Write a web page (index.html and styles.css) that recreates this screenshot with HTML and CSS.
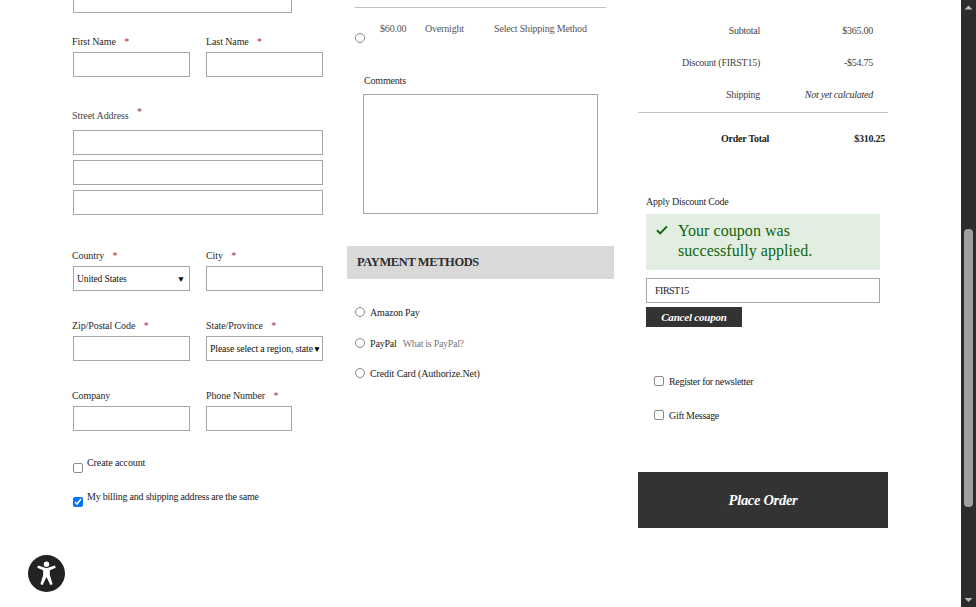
FILE: index.html
```html
<!DOCTYPE html>
<html lang="en">
<head>
<meta charset="utf-8">
<title>Checkout</title>
<link rel="stylesheet" href="styles.css">
</head>
<body>
<main class="page">
  <section class="col-address">
    <input class="field field-cut" type="text" aria-label="Email">
    <div class="row row-name">
      <div class="cell"><label class="lbl">First Name <i class="req">*</i></label><input class="field" type="text"></div>
      <div class="cell"><label class="lbl">Last Name <i class="req">*</i></label><input class="field" type="text"></div>
    </div>
    <div class="street">
      <label class="lbl lbl-street">Street Address <i class="req req-up">*</i></label>
      <input class="field full" type="text">
      <input class="field full" type="text">
      <input class="field full" type="text">
    </div>
    <div class="row row-country">
      <div class="cell"><label class="lbl">Country <i class="req">*</i></label><div class="field sel">United States<span class="caret">▼</span></div></div>
      <div class="cell"><label class="lbl">City <i class="req">*</i></label><input class="field" type="text"></div>
    </div>
    <div class="row row-next">
      <div class="cell"><label class="lbl">Zip/Postal Code <i class="req">*</i></label><input class="field" type="text"></div>
      <div class="cell"><label class="lbl">State/Province <i class="req">*</i></label><div class="field sel sel-tight">Please select a region, state<span class="caret">▼</span></div></div>
    </div>
    <div class="row row-next">
      <div class="cell"><label class="lbl">Company</label><input class="field" type="text"></div>
      <div class="cell"><label class="lbl">Phone Number <i class="req">*</i></label><input class="field short" type="text"></div>
    </div>
    <div class="check check-first"><input class="box" type="checkbox"><span>Create account</span></div>
    <div class="check check-second"><input type="checkbox" checked><span>My billing and shipping address are the same</span></div>
  </section>

  <section class="col-methods">
    <hr class="rule rule-ship">
    <div class="ship">
      <input class="dot" type="radio" name="ship">
      <span class="ship-price">$60.00</span>
      <span class="ship-name">Overnight</span>
      <span class="ship-method">Select Shipping Method</span>
    </div>
    <label class="lbl lbl-comments">Comments</label>
    <textarea class="comments"></textarea>
    <h2 class="pay-title">PAYMENT METHODS</h2>
    <div class="pay pay-a"><input class="dot" type="radio" name="pay"><span>Amazon Pay</span></div>
    <div class="pay pay-b"><input class="dot" type="radio" name="pay"><span>PayPal</span><a class="pay-link">What is PayPal?</a></div>
    <div class="pay pay-c"><input class="dot" type="radio" name="pay"><span>Credit Card (Authorize.Net)</span></div>
  </section>

  <section class="col-summary">
    <div class="sum"><span class="sum-k">Subtotal</span><span class="sum-v">$365.00</span></div>
    <div class="sum"><span class="sum-k">Discount (FIRST15)</span><span class="sum-v">-$54.75</span></div>
    <div class="sum"><span class="sum-k">Shipping</span><span class="sum-v sum-i">Not yet calculated</span></div>
    <hr class="rule rule-sum">
    <div class="sum-total"><span class="tot-k">Order Total</span><span class="tot-v">$310.25</span></div>
    <div class="discount">
      <label class="lbl lbl-discount">Apply Discount Code</label>
      <div class="notice">
        <svg class="tick" width="12" height="10" viewBox="0 0 12 10"><path d="M1 5.2 4.2 8.4 11 1.4" fill="none" stroke="#0e660e" stroke-width="2"/></svg>
        <p>Your coupon was successfully applied.</p>
      </div>
      <input class="field coupon" type="text" value="FIRST15">
      <button class="cancel" type="button">Cancel coupon</button>
    </div>
    <div class="check-r check-news"><input class="box" type="checkbox"><span>Register for newsletter</span></div>
    <div class="check-r check-gift"><input class="box" type="checkbox"><span>Gift Message</span></div>
    <button class="place" type="button">Place Order</button>
  </section>
</main>

<div class="scrollbar" aria-hidden="true">
  <svg class="arrow" width="15" height="14" viewBox="0 0 15 14"><path d="M3.5 9.5 7.5 5.5 11.5 9.5Z" fill="#bdbdbd"/></svg>
  <div class="track"><div class="thumb"></div></div>
  <svg class="arrow" width="15" height="14" viewBox="0 0 15 14"><path d="M3.5 5 7.5 9 11.5 5Z" fill="#bdbdbd"/></svg>
</div>

<button class="a11y" type="button" aria-label="Accessibility">
  <svg width="37" height="37" viewBox="0 0 38 38">
    <circle cx="19" cy="19" r="19" fill="#222"/>
    <circle cx="19" cy="9.4" r="2.8" fill="#fff"/>
    <path d="M10.4 10.9 19 13.6 27.6 10.9 28.5 13.2 22.5 15.6 22.4 20.5 25.3 30 22.9 30.9 19.3 23 18.7 23 15.1 30.9 12.7 30 15.6 20.5 15.5 15.6 9.5 13.2Z" fill="#fff"/>
  </svg>
</button>
</body>
</html>
```

FILE: styles.css
```css
* { box-sizing: border-box; }
html, body { margin: 0; height: 607px; overflow: hidden; background: #fff; }
body {
  display: flex;
  font-family: "Liberation Serif", "Times New Roman", serif;
  font-size: 10px;
  color: #222;
  letter-spacing: -0.1px;
}
.page {
  flex: 1;
  display: flex;
  align-items: flex-start;
  height: 607px;
  overflow: hidden;
}
.col-address { width: 323px; padding-left: 72px; flex: none; }
.col-methods { width: 267px; margin-left: 24px; flex: none; letter-spacing: -0.18px; }
.col-summary { width: 250px; margin-left: 24px; flex: none; letter-spacing: -0.25px; }

.lbl { display: block; height: 10px; line-height: 10px; font-size: 10px; white-space: nowrap; color: #2a2a2a; }
.req { color: #b0233f; font-style: normal; margin-left: 6px; }
.field {
  display: block;
  height: 25px;
  width: 117px;
  margin: 0 0 0 1px;
  padding: 0 4px;
  border: 1px solid #a6a6a6;
  border-radius: 0;
  background: #fff;
  font: inherit;
  outline: 0;
}
.dot {
  appearance: none;
  width: 10px;
  height: 10px;
  border: 1px solid #8a8a8a;
  border-radius: 50%;
  background: #fff;
}
.box {
  appearance: none;
  width: 10px;
  height: 10px;
  border: 1px solid #8a8a8a;
  border-radius: 2px;
  background: #fff;
}
.field-cut { width: 219px; margin-top: -12px; }
.row { display: flex; gap: 16px; }
.row .lbl { margin-bottom: 5px; }
.cell { width: 118px; }
.cell + .cell { width: 117px; }
.cell + .cell .field { margin-left: 0; }
.row-name { margin-top: 24px; }
.row-country { margin-top: 36px; }
.row-next { margin-top: 30px; }
.field.full { width: 250px; margin-bottom: 5px; }
.field.short { width: 86px; }
.street { margin-top: 34px; }
.lbl-street { margin-bottom: 9px; color: #444; }
.req-up { position: relative; top: -4px; }
.sel {
  display: flex;
  align-items: center;
  justify-content: space-between;
  padding: 0 4px 0 3px;
  color: #111;
  white-space: nowrap;
  font-size: 9.5px;
}
.sel-tight { padding: 0 3px; letter-spacing: -0.14px; font-size: 9.8px; }
.caret { font-size: 8.5px; color: #000; }

.check { display: flex; align-items: flex-start; color: #222; }
.check input { width: 10px; height: 10px; margin: 5px 4px 0 1px; flex: none; }
.check span { line-height: 10px; }
.check-first { margin-top: 27px; }
.check-second { margin-top: 19px; letter-spacing: -0.22px; }

.rule { border: 0; height: 1px; background: #bfbfbf; margin: 0; }
.rule-ship { margin: 7px 8px 0; }
.ship { position: relative; height: 50px; padding-top: 25px; color: #555; }
.ship input { display: block; margin: 0 0 0 8px; }
.ship span { position: absolute; top: 16px; line-height: 10px; }
.ship-price { left: 33px; }
.ship-name { left: 78px; }
.ship-method { left: 147px; }
.lbl-comments { margin: 18px 0 8px 17px; }
.comments {
  display: block;
  width: 235px;
  height: 120px;
  margin: 0 0 0 16px;
  padding: 4px;
  border: 1px solid #a6a6a6;
  border-radius: 0;
  resize: none;
  outline: 0;
}
.pay-title {
  margin: 32px 0 0;
  height: 33px;
  padding-left: 10px;
  background: #d9d9d9;
  font-size: 12.5px;
  font-weight: 700;
  line-height: 32px;
  letter-spacing: -0.4px;
  color: #2e2e2e;
}
.pay { display: flex; align-items: center; height: 10px; padding-left: 8px; color: #222; }
.pay input { margin: 0 5px 0 0; }
.pay-a { margin-top: 28px; }
.pay-b { margin-top: 21px; }
.pay-c { margin-top: 20px; letter-spacing: -0.12px; }
.pay-link { margin-left: 6px; color: #777; letter-spacing: -0.3px; }

.sum { display: flex; height: 10px; line-height: 10px; margin-bottom: 22px; color: #444; }
.sum:first-child { margin-top: 26px; }
.sum-k { width: 122px; text-align: right; }
.sum-v { width: 113px; text-align: right; }
.sum-i { font-style: italic; color: #333; }
.rule-sum { margin-top: -10px; }
.sum-total { display: flex; height: 10px; line-height: 10px; margin-top: 21px; font-weight: 700; color: #222; }
.tot-k { width: 131px; text-align: right; }
.tot-v { width: 116px; text-align: right; }
.discount { padding-left: 8px; margin-top: 53px; }
.lbl-discount { margin-bottom: 7px; }
.notice {
  display: flex;
  width: 234px;
  height: 56px;
  padding: 7px 10px 0 10px;
  background: #e2eee2;
  color: #0e660e;
  font-size: 16px;
  line-height: 20px;
  letter-spacing: 0.05px;
}
.notice p { margin: 0 0 0 10px; }
.tick { margin-top: 4px; flex: none; }
.coupon { width: 234px; margin: 8px 0 4px; padding: 0 8px; color: #222; letter-spacing: -0.5px; }
.cancel {
  display: block;
  width: 96px;
  height: 20px;
  border: 0;
  padding: 0;
  background: #333;
  color: #fff;
  font: italic 700 11px "Liberation Serif", serif;
  letter-spacing: -0.2px;
}
.check-r { display: flex; align-items: center; height: 10px; padding-left: 16px; color: #222; letter-spacing: -0.3px; }
.check-r input { margin: 0 5px 0 0; }
.check-news { margin-top: 49px; }
.check-gift { margin-top: 24px; }
.place {
  display: block;
  width: 250px;
  height: 56px;
  margin-top: 52px;
  border: 0;
  padding: 0;
  background: #333;
  color: #fff;
  font: italic 700 14.5px "Liberation Serif", serif;
  letter-spacing: -0.3px;
}

.scrollbar {
  flex: none;
  width: 15px;
  height: 607px;
  display: flex;
  flex-direction: column;
  background: #2c2c2c;
}
.arrow { display: block; flex: none; }
.track { flex: 1; padding-top: 215px; }
.thumb { width: 9px; height: 278px; margin-left: 3px; background: #a0a0a0; border-radius: 4px; }

.a11y {
  position: fixed;
  left: 28px;
  top: 555px;
  width: 37px;
  height: 37px;
  padding: 0;
  border: 0;
  border-radius: 50%;
  background: none;
}
.a11y svg { display: block; }
```
